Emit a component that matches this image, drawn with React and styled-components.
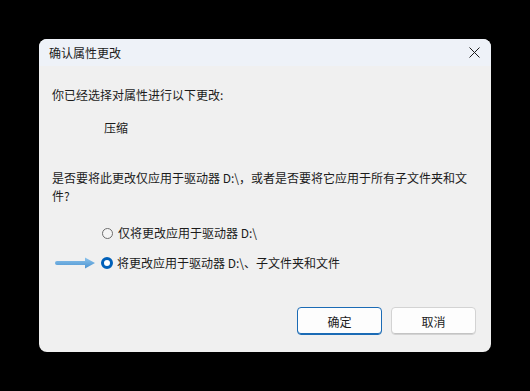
import React from "react";
import styled, { createGlobalStyle } from "styled-components";

const Global = createGlobalStyle`
  html, body { margin: 0; padding: 0; background: #000; }
  body { font-family: "Noto Sans CJK SC", "Noto Sans", sans-serif; }
`;

const Page = styled.div`
  width: 530px;
  height: 391px;
  background: #000;
  padding: 39px 0 0 39px;
  box-sizing: border-box;
`;

const Dialog = styled.div`
  width: 452px;
  height: 313px;
  background: #f0f0f0;
  border-radius: 8px;
  overflow: hidden;
  display: flex;
  flex-direction: column;
  color: #1b1b1b;
  font-size: 12px;
`;

const TitleBar = styled.div`
  height: 27px;
  flex: none;
  background: #eef2f8;
  display: flex;
  align-items: center;
  justify-content: space-between;
  padding: 0 10px 0 10px;
  font-size: 12px;
`;

const CloseBtn = styled.div`
  width: 12px;
  height: 12px;
  display: flex;
  align-items: center;
  justify-content: center;
  margin-right: 1px;
`;

const Body = styled.div`
  flex: 1;
  display: flex;
  flex-direction: column;
  padding: 20px 15px 17px 13px;
`;

const Line = styled.div`
  line-height: 18px;
  margin-top: ${(p) => p.$mt || 0}px;
  padding-left: ${(p) => p.$indent || 0}px;
  white-space: nowrap;
`;

const Options = styled.div`
  display: flex;
  flex-direction: column;
  gap: 12px;
  margin-top: 19px;
`;

const OptionRow = styled.label`
  display: flex;
  align-items: center;
  height: 18px;
  line-height: 18px;
  position: relative;
  padding-left: 49px;
`;

const Radio = styled.span`
  width: ${(p) => (p.$checked ? 12 : 11)}px;
  height: ${(p) => (p.$checked ? 12 : 11)}px;
  box-sizing: border-box;
  border-radius: 50%;
  margin-right: ${(p) => (p.$checked ? 4 : 5)}px;
  margin-left: ${(p) => (p.$checked ? 0 : 1)}px;
  flex: none;
  background: ${(p) => (p.$checked ? "#ffffff" : "#f5f5f5")};
  border: ${(p) => (p.$checked ? "3.5px solid #0060b9" : "1px solid #6d6d6d")};
`;

const Arrow = styled.svg`
  position: absolute;
  left: 3px;
  top: 2px;
`;

const Footer = styled.div`
  margin-top: auto;
  display: flex;
  justify-content: flex-end;
  gap: 9px;
`;

const Button = styled.button`
  width: 85px;
  height: 28px;
  box-sizing: border-box;
  border-radius: 4px;
  font-family: inherit;
  font-size: 12px;
  color: #1b1b1b;
  background: #fdfdfd;
  border: 1px solid ${(p) => (p.$primary ? "#1b6bb5" : "#d3d3d3")};
  ${(p) => (p.$primary ? "box-shadow: inset 0 -1px 0 #1b6bb5;" : "box-shadow: inset 0 -1px 0 #c4c4c4;")}
  padding: 0;
`;

export default function App() {
  return (
    <>
      <Global />
      <Page>
        <Dialog>
          <TitleBar>
            <span>确认属性更改</span>
            <CloseBtn>
              <svg width="11" height="11" viewBox="0 0 11 11">
                <path d="M0.5 0.5 L10.5 10.5 M10.5 0.5 L0.5 10.5" stroke="#1b1b1b" strokeWidth="1" fill="none" />
              </svg>
            </CloseBtn>
          </TitleBar>
          <Body>
            <Line>你已经选择对属性进行以下更改:</Line>
            <Line $mt={15} $indent={52}>压缩</Line>
            <Line $mt={32}>
              是否要将此更改仅应用于驱动器 D:\，或者是否要将它应用于所有子文件夹和文
              <br />
              件?
            </Line>
            <Options>
              <OptionRow>
                <Radio />
                仅将更改应用于驱动器 D:\
              </OptionRow>
              <OptionRow>
                <Arrow width="42" height="14" viewBox="0 0 42 14">
                  <defs>
                    <linearGradient id="ag" x1="0" y1="0" x2="0" y2="1">
                      <stop offset="0" stopColor="#8cc3ec" />
                      <stop offset="1" stopColor="#4b93d1" />
                    </linearGradient>
                  </defs>
                  <path
                    d="M2 5 L30 5 L30 1.5 L40 7 L30 12.5 L30 9 L2 9 Q0 9 0 7 Q0 5 2 5 Z"
                    fill="url(#ag)"
                  />
                </Arrow>
                <Radio $checked />
                将更改应用于驱动器 D:\、子文件夹和文件
              </OptionRow>
            </Options>
            <Footer>
              <Button $primary>确定</Button>
              <Button>取消</Button>
            </Footer>
          </Body>
        </Dialog>
      </Page>
    </>
  );
}
